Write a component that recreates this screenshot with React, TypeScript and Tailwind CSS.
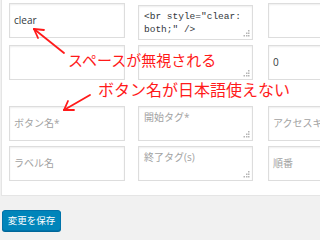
import React from "react";

const Grip = () => (
  <svg className="absolute right-[2px] bottom-[2px]" width="7" height="7" viewBox="0 0 7 7">
    <rect x="5" y="0" width="1.5" height="1.5" fill="#b5b5b5" />
    <rect x="3" y="2.5" width="1.5" height="1.5" fill="#b5b5b5" />
    <rect x="5" y="2.5" width="1.5" height="1.5" fill="#b5b5b5" />
    <rect x="0.5" y="5" width="1.5" height="1.5" fill="#b5b5b5" />
    <rect x="3" y="5" width="1.5" height="1.5" fill="#b5b5b5" />
    <rect x="5" y="5" width="1.5" height="1.5" fill="#b5b5b5" />
  </svg>
);

const Input = ({ value, placeholder }: { value?: string; placeholder?: string }) => (
  <div className="h-[35px] border border-[#dddddd] shadow-[inset_0_1px_2px_rgba(0,0,0,0.07)] bg-white flex items-center pl-[4px] text-[10px] whitespace-nowrap overflow-hidden">
    {value ? (
      <span className="text-[#32373c]">{value}</span>
    ) : (
      <span className="text-[#a2a2a2]">{placeholder}</span>
    )}
  </div>
);

const Area = ({ lines, placeholder }: { lines?: string[]; placeholder?: string }) => (
  <div className="relative h-[35px] border border-[#dddddd] shadow-[inset_0_1px_2px_rgba(0,0,0,0.07)] bg-white pl-[5px] pt-[4px] overflow-hidden">
    {lines ? (
      <div className="font-['Liberation_Mono','DejaVu_Sans_Mono',monospace] text-[9.5px] leading-[13px] text-[#32373c] whitespace-pre">
        {lines.map((l, i) => (
          <div key={i}>{l}</div>
        ))}
      </div>
    ) : (
      <div className="text-[10px] leading-[13px] text-[#a2a2a2]">{placeholder}</div>
    )}
    <Grip />
  </div>
);

const Row = ({ children, className }: { children: React.ReactNode; className?: string }) => (
  <div className={"grid grid-cols-[116px_115px_116px] gap-x-[13px] " + (className ?? "")}>{children}</div>
);

export default function App() {
  return (
    <div className="relative w-[320px] h-[240px] overflow-hidden bg-[#f1f1f1] font-['Open_Sans','Noto_Sans_CJK_JP',sans-serif]">
      <div className="ml-[1px] w-[420px] h-[196px] bg-white border border-t-0 border-[#e5e5e5] pl-[7px] pt-[3px]">
        <Row>
          <Input value="clear" />
          <div className="pt-[2px]">
            <Area lines={['<br style="clear:', 'both;" />']} />
          </div>
          <div className="ml-[2px]">
            <Input />
          </div>
        </Row>
        <Row className="mt-[5px]">
          <Input />
          <Area lines={[""]} />
          <div className="ml-[2px]">
            <Input value="0" />
          </div>
        </Row>
        <Row className="mt-[26px]">
          <Input placeholder="ボタン名*" />
          <Area placeholder="開始タグ*" />
          <div className="ml-[2px]">
            <Input placeholder="アクセスキー" />
          </div>
        </Row>
        <Row className="mt-[5px]">
          <Input placeholder="ラベル名" />
          <Area placeholder="終了タグ(s)" />
          <div className="ml-[2px]">
            <Input placeholder="順番" />
          </div>
        </Row>
      </div>
      <button className="mt-[14px] ml-[2px] w-[59px] h-[21px] rounded-[3px] bg-[#0085ba] border border-[#0073aa] shadow-[0_1px_0_#006799] text-white text-[9.5px] leading-none font-['Noto_Sans_CJK_JP',sans-serif]">
        変更を保存
      </button>

      {/* annotations */}
      <div className="absolute left-[68px] top-[50px] text-[15px] leading-[20px] text-[#ff1a1a] font-['Noto_Sans_CJK_JP',sans-serif] whitespace-nowrap">
        スペースが無視される
      </div>
      <div className="absolute left-[98px] top-[78px] text-[16px] leading-[22px] text-[#ff1a1a] font-['Noto_Sans_CJK_JP',sans-serif] whitespace-nowrap">
        ボタン名が日本語使えない
      </div>
      <svg className="absolute left-0 top-0" width="320" height="240" viewBox="0 0 320 240">
        <g stroke="#ff1a1a" strokeWidth="1.8" fill="none" strokeLinecap="round">
          <path d="M64 53 L34 29" />
          <path d="M34 29 L44 30" />
          <path d="M34 29 L38 38" />
          <path d="M90 95 L64 110" />
          <path d="M64 110 L68 101" />
          <path d="M64 110 L74 110" />
        </g>
      </svg>
    </div>
  );
}
